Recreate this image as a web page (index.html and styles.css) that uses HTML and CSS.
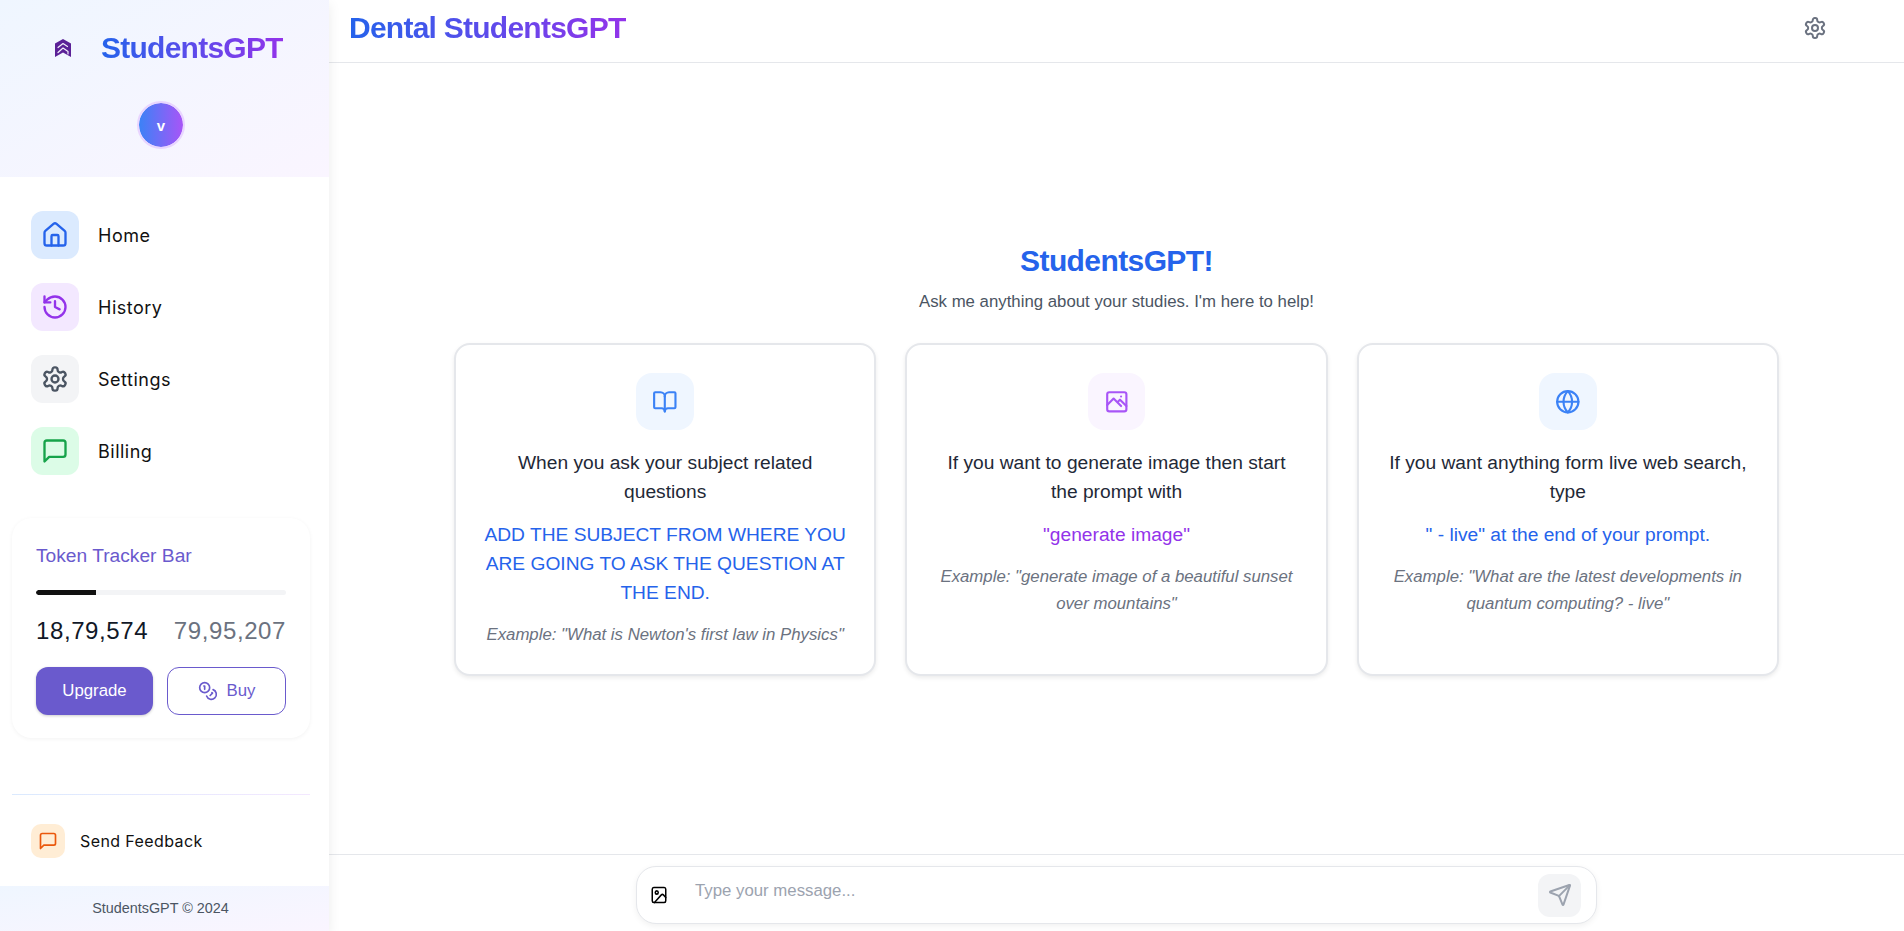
FILE: index.html
```html
<!DOCTYPE html>
<html lang="en">
<head>
    <meta charset="UTF-8">
    <meta name="viewport" content="width=device-width, initial-scale=1.0">
    <title>Dental StudentsGPT</title>
    <link rel="stylesheet" href="styles.css">
</head>
<body>

    <aside class="sidebar">
        <div class="side-head">
            <div class="brand">
                <svg class="brand-logo" viewBox="0 0 16 18"><path class="logo-shape" d="M8 0 16 4.500V18L8 13.500 0 18V4.500Z"/><path class="logo-cut" d="M3 8.500 8 4.500 12.500 7.500"/><path class="logo-cut" d="M3 13.500 8 9 13 12.500V15"/></svg>
                <span class="brand-name">StudentsGPT</span>
            </div>
            <div class="avatar">v</div>
        </div>

        <nav class="side-nav">
            <a class="nav-item">
                <span class="nav-icon bg-blue">
                    <svg class="ico-28 c-blue" viewBox="0 0 24 24"><path d="M15 21v-8a1 1 0 0 0-1-1h-4a1 1 0 0 0-1 1v8"/><path d="M3 10a2 2 0 0 1 .709-1.528l7-5.999a2 2 0 0 1 2.582 0l7 5.999A2 2 0 0 1 21 10v9a2 2 0 0 1-2 2H5a2 2 0 0 1-2-2z"/></svg>
                </span>
                Home
            </a>
            <a class="nav-item">
                <span class="nav-icon bg-purple">
                    <svg class="ico-28 c-purple" viewBox="0 0 24 24"><path d="M3 12a9 9 0 1 0 9-9 9.75 9.75 0 0 0-6.74 2.74L3 8"/><path d="M3 3v5h5"/><path d="M12 7v5l4 2"/></svg>
                </span>
                History
            </a>
            <a class="nav-item">
                <span class="nav-icon bg-gray">
                    <svg class="ico-28 c-slate" viewBox="0 0 24 24"><path d="M12.22 2h-.44a2 2 0 0 0-2 2v.18a2 2 0 0 1-1 1.73l-.43.25a2 2 0 0 1-2 0l-.15-.08a2 2 0 0 0-2.73.73l-.22.38a2 2 0 0 0 .73 2.73l.15.1a2 2 0 0 1 1 1.72v.51a2 2 0 0 1-1 1.74l-.15.09a2 2 0 0 0-.73 2.73l.22.38a2 2 0 0 0 2.73.73l.15-.08a2 2 0 0 1 2 0l.43.25a2 2 0 0 1 1 1.73V20a2 2 0 0 0 2 2h.44a2 2 0 0 0 2-2v-.18a2 2 0 0 1 1-1.73l.43-.25a2 2 0 0 1 2 0l.15.08a2 2 0 0 0 2.73-.73l.22-.39a2 2 0 0 0-.73-2.73l-.15-.08a2 2 0 0 1-1-1.74v-.5a2 2 0 0 1 1-1.74l.15-.09a2 2 0 0 0 .73-2.73l-.22-.38a2 2 0 0 0-2.73-.73l-.15.08a2 2 0 0 1-2 0l-.43-.25a2 2 0 0 1-1-1.73V4a2 2 0 0 0-2-2z"/><circle cx="12" cy="12" r="3"/></svg>
                </span>
                Settings
            </a>
            <a class="nav-item">
                <span class="nav-icon bg-green">
                    <svg class="ico-28 c-green" viewBox="0 0 24 24"><path d="M21 15a2 2 0 0 1-2 2H7l-4 4V5a2 2 0 0 1 2-2h14a2 2 0 0 1 2 2z"/></svg>
                </span>
                Billing
            </a>
        </nav>

        <div class="token-card">
            <div class="token-title">Token Tracker Bar</div>
            <div class="token-bar"><div class="token-fill" style="width: 24%"></div></div>
            <div class="token-nums">
                <span class="used">18,79,574</span>
                <span class="total">79,95,207</span>
            </div>
            <div class="token-actions">
                <button class="btn-upgrade">Upgrade</button>
                <button class="btn-buy">
                    <svg class="ico-20" viewBox="0 0 24 24"><circle cx="8" cy="8" r="6"/><path d="M18.09 10.37A6 6 0 1 1 10.34 18"/><path d="M7 6h1v4"/><path d="m16.71 13.88.7.71-2.82 2.82"/></svg>
                    Buy
                </button>
            </div>
        </div>

        <div class="side-bottom">
            <div class="side-line"></div>
            <a class="feedback">
                <span class="feedback-icon">
                    <svg class="ico-20 c-orange" viewBox="0 0 24 24"><path d="M21 15a2 2 0 0 1-2 2H7l-4 4V5a2 2 0 0 1 2-2h14a2 2 0 0 1 2 2z"/></svg>
                </span>
                Send Feedback
            </a>
            <div class="side-foot">StudentsGPT © 2024</div>
        </div>
    </aside>

    <main class="main">
        <header class="topbar">
            <h1 class="page-title">Dental StudentsGPT</h1>
            <svg class="ico-24 c-gray" viewBox="0 0 24 24"><path d="M12.22 2h-.44a2 2 0 0 0-2 2v.18a2 2 0 0 1-1 1.73l-.43.25a2 2 0 0 1-2 0l-.15-.08a2 2 0 0 0-2.73.73l-.22.38a2 2 0 0 0 .73 2.73l.15.1a2 2 0 0 1 1 1.72v.51a2 2 0 0 1-1 1.74l-.15.09a2 2 0 0 0-.73 2.73l.22.38a2 2 0 0 0 2.73.73l.15-.08a2 2 0 0 1 2 0l.43.25a2 2 0 0 1 1 1.73V20a2 2 0 0 0 2 2h.44a2 2 0 0 0 2-2v-.18a2 2 0 0 1 1-1.73l.43-.25a2 2 0 0 1 2 0l.15.08a2 2 0 0 0 2.73-.73l.22-.39a2 2 0 0 0-.73-2.73l-.15-.08a2 2 0 0 1-1-1.74v-.5a2 2 0 0 1 1-1.74l.15-.09a2 2 0 0 0 .73-2.73l-.22-.38a2 2 0 0 0-2.73-.73l-.15.08a2 2 0 0 1-2 0l-.43-.25a2 2 0 0 1-1-1.73V4a2 2 0 0 0-2-2z"/><circle cx="12" cy="12" r="3"/></svg>
        </header>

        <section class="welcome">
            <h2 class="welcome-title">StudentsGPT!</h2>
            <p class="welcome-sub">Ask me anything about your studies. I'm here to help!</p>

            <div class="cards">
                <div class="card">
                    <span class="card-icon bg-blue-soft">
                        <svg class="ico-26 c-blue-light" viewBox="0 0 24 24"><path d="M12 7v14"/><path d="M3 18a1 1 0 0 1-1-1V4a1 1 0 0 1 1-1h5a4 4 0 0 1 4 4 4 4 0 0 1 4-4h5a1 1 0 0 1 1 1v13a1 1 0 0 1-1 1h-6a3 3 0 0 0-3 3 3 3 0 0 0-3-3z"/></svg>
                    </span>
                    <p class="card-text">When you ask your subject related questions</p>
                    <p class="card-hint c-text-blue">ADD THE SUBJECT FROM WHERE YOU ARE GOING TO ASK THE QUESTION AT THE END.</p>
                    <p class="card-example">Example: "What is Newton's first law in Physics"</p>
                </div>
                <div class="card">
                    <span class="card-icon bg-purple-soft">
                        <svg class="ico-26 c-purple-light" viewBox="0 0 24 24"><rect x="3" y="3" width="18" height="18" rx="2"/><path d="M3 15l6-6 7 7"/><path d="M13 12l2-2 6 6"/><path d="M16 7h.01"/></svg>
                    </span>
                    <p class="card-text">If you want to generate image then start the prompt with</p>
                    <p class="card-hint c-text-purple">"generate image"</p>
                    <p class="card-example">Example: "generate image of a beautiful sunset over mountains"</p>
                </div>
                <div class="card">
                    <span class="card-icon bg-blue-soft">
                        <svg class="ico-26 c-blue-light" viewBox="0 0 24 24"><circle cx="12" cy="12" r="10"/><path d="M12 2a14.500 14.500 0 0 0 0 20 14.500 14.500 0 0 0 0-20"/><path d="M2 12h20"/></svg>
                    </span>
                    <p class="card-text">If you want anything form live web search, type</p>
                    <p class="card-hint c-text-blue">" - live" at the end of your prompt.</p>
                    <p class="card-example">Example: "What are the latest developments in quantum computing? - live"</p>
                </div>
            </div>
        </section>

        <footer class="composer">
            <div class="composer-box">
                <svg class="composer-image" viewBox="0 0 24 24" preserveAspectRatio="none"><rect x="3" y="3" width="18" height="18" rx="2"/><circle cx="9" cy="9" r="2"/><path d="m21 15-3.086-3.086a2 2 0 0 0-2.828 0L6 21"/></svg>
                <span class="composer-text">Type your message...</span>
                <button class="send-btn">
                    <svg class="ico-24 c-muted" viewBox="0 0 24 24"><path d="M14.536 21.686a.5.5 0 0 0 .937-.024l6.500-19a.496.496 0 0 0-.635-.635l-19 6.500a.5.5 0 0 0-.024.937l7.930 3.180a2 2 0 0 1 1.112 1.110z"/><path d="m21.854 2.147-10.940 10.939"/></svg>
                </button>
            </div>
        </footer>
    </main>

</body>
</html>
```

FILE: styles.css
```css
* {
    box-sizing: border-box;
}
body {
    font-family: "Liberation Sans", Arial, sans-serif;
    margin: 0;
    height: 931px;
    overflow: hidden;
    display: flex;
    background: #fff;
    color: #111827;
}
p, h1, h2 {
    margin: 0;
}
svg {
    fill: none;
    stroke: currentColor;
    stroke-width: 2;
    stroke-linecap: round;
    stroke-linejoin: round;
    flex-shrink: 0;
}
.ico-20 { width: 20px; height: 20px; }
.ico-24 { width: 24px; height: 24px; }
.ico-26 { width: 25.6px; height: 25.6px; }
.ico-28 { width: 28px; height: 28px; }
.c-blue { color: #2563eb; }
.c-blue-light { color: #3b82f6; }
.c-purple { color: #9333ea; }
.c-purple-light { color: #a855f7; }
.c-slate { color: #4b5563; }
.c-gray { color: #6b7280; }
.c-green { color: #16a34a; }
.c-orange { color: #ea580c; }
.c-muted { color: #9ca3af; }
.bg-blue { background: #dbeafe; }
.bg-purple { background: #f3e8ff; }
.bg-gray { background: #f3f4f6; }
.bg-green { background: #dcfce7; }
.bg-blue-soft { background: #eff6ff; }
.bg-purple-soft { background: #faf5ff; }
.c-text-blue { color: #2563eb; }
.c-text-purple { color: #9333ea; }

/* sidebar */
.sidebar {
    width: 329px;
    flex-shrink: 0;
    height: 100%;
    display: flex;
    flex-direction: column;
    background: #fff;
    box-shadow: 0 4px 12px rgba(0, 0, 0, 0.08);
    position: relative;
    z-index: 2;
}
.side-head {
    height: 177px;
    padding-top: 24px;
    background: linear-gradient(to bottom right, #eff6ff, #faf5ff);
}
.brand {
    display: flex;
    align-items: center;
    height: 48px;
    padding-left: 55px;
}
.brand-logo {
    width: 16px;
    height: 18px;
    margin-right: 30px;
}
.logo-shape {
    fill: #5b2197;
    stroke: none;
}
.logo-cut {
    stroke: #f3f0fc;
    stroke-width: 1.2;
}
.brand-name {
    font-size: 30px;
    font-weight: 700;
    letter-spacing: -0.75px;
    background: linear-gradient(to right, #2563eb, #9333ea);
    -webkit-background-clip: text;
    background-clip: text;
    color: transparent;
}
.avatar {
    width: 48px;
    height: 48px;
    margin: 29px 0 0 137px;
    border-radius: 50%;
    border: 2px solid #e9d5ff;
    display: flex;
    align-items: center;
    justify-content: center;
    background: linear-gradient(to right, #3b82f6, #a855f7);
    color: #fff;
    font-size: 15px;
    font-weight: 700;
    background-clip: padding-box;
}
.side-nav {
    display: flex;
    flex-direction: column;
    gap: 24px;
    padding: 34px 31px 0;
}
.nav-item {
    display: flex;
    align-items: center;
    gap: 19px;
    font-family: Inter, sans-serif;
    font-size: 18px;
    letter-spacing: 0.5px;
    color: #111;
}
.nav-icon {
    width: 48px;
    height: 48px;
    border-radius: 12px;
    display: flex;
    align-items: center;
    justify-content: center;
}
.token-card {
    margin: 43px 19px 0 12px;
    height: 220px;
    padding: 24px;
    border-radius: 20px;
    background: #fff;
    box-shadow: 0 1px 4px rgba(0, 0, 0, 0.05);
}
.token-title {
    font-size: 19.2px;
    color: #6a5acd;
    line-height: 27px;
}
.token-bar {
    height: 5px;
    margin-top: 21px;
    border-radius: 3px;
    background: #f3f4f6;
    overflow: hidden;
}
.token-fill {
    height: 100%;
    background: #111;
    border-radius: 3px 0 0 3px;
}
.token-nums {
    display: flex;
    justify-content: space-between;
    margin-top: 21px;
    font-size: 24px;
    letter-spacing: 0.6px;
    line-height: 30px;
}
.used { color: #111827; }
.total { color: #6b7280; }
.token-actions {
    display: flex;
    gap: 14px;
    margin-top: 21px;
}
.token-actions button {
    height: 48px;
    border-radius: 12px;
    font-family: inherit;
    font-size: 16.8px;
}
.btn-upgrade {
    width: 117px;
    border: none;
    background: #6a5acd;
    color: #fff;
    box-shadow: 0 1px 3px rgba(0, 0, 0, 0.2);
}
.btn-buy {
    width: 119px;
    border: 1px solid #6a5acd;
    background: #fff;
    color: #6a5acd;
    display: flex;
    align-items: center;
    justify-content: center;
    gap: 9px;
}
.side-bottom {
    margin-top: auto;
}
.side-line {
    height: 1px;
    margin: 0 19px 0 12px;
    background: linear-gradient(to right, #dbeafe, #f3e8ff);
}
.feedback {
    display: flex;
    align-items: center;
    gap: 15px;
    height: 91px;
    padding-left: 31px;
    font-family: Inter, sans-serif;
    font-size: 16px;
    letter-spacing: 0.4px;
    color: #111;
}
.feedback-icon {
    width: 34px;
    height: 34px;
    border-radius: 10px;
    background: #ffedd5;
    display: flex;
    align-items: center;
    justify-content: center;
}
.side-foot {
    height: 45px;
    line-height: 45px;
    padding-right: 8px;
    text-align: center;
    font-size: 14.4px;
    color: #4b5563;
    background: linear-gradient(to bottom right, #eff6ff, #faf5ff);
}

/* main */
.main {
    flex: 1;
    min-width: 0;
    height: 100%;
    display: flex;
    flex-direction: column;
}
.topbar {
    height: 63px;
    flex-shrink: 0;
    border-bottom: 1px solid #e5e7eb;
    display: flex;
    align-items: center;
    justify-content: space-between;
    padding: 0 77px 6px 20px;
}
.page-title {
    font-size: 30px;
    font-weight: 700;
    letter-spacing: -0.75px;
    background: linear-gradient(to right, #2563eb, #9333ea);
    -webkit-background-clip: text;
    background-clip: text;
    color: transparent;
}
.welcome {
    flex: 1;
    min-height: 0;
    padding-top: 180px;
    text-align: center;
}
.welcome-title {
    font-size: 30px;
    font-weight: 700;
    letter-spacing: -0.6px;
    color: #2563eb;
    line-height: 36px;
}
.welcome-sub {
    margin-top: 11px;
    font-size: 16.8px;
    line-height: 24px;
    color: #4b5563;
}
.cards {
    display: grid;
    grid-template-columns: repeat(3, 1fr);
    gap: 29px;
    width: 1325px;
    margin: 29px auto 0;
}
.card {
    height: 333px;
    padding: 27.500px 26px;
    border: 2px solid #e5e7eb;
    border-radius: 16px;
    background: #fff;
    box-shadow: 0 2px 4px rgba(0, 0, 0, 0.08);
    display: flex;
    flex-direction: column;
    align-items: center;
}
.card-icon {
    width: 57.6px;
    height: 57.6px;
    flex-shrink: 0;
    border-radius: 16px;
    display: flex;
    align-items: center;
    justify-content: center;
}
.card-text {
    margin-top: 18px;
    font-size: 19.2px;
    line-height: 29px;
    color: #1f2937;
}
.card-hint {
    margin-top: 14px;
    font-size: 19.2px;
    line-height: 29px;
}
.card-example {
    margin-top: 15px;
    font-size: 16.8px;
    line-height: 26.8px;
    font-style: italic;
    color: #6b7280;
}
.composer {
    height: 77px;
    flex-shrink: 0;
    border-top: 1px solid #e5e7eb;
    padding: 11px 0 0 0;
}
.composer-box {
    width: 961px;
    height: 58px;
    margin: 0 auto;
    border: 1px solid #e5e7eb;
    border-radius: 20px;
    background: #fff;
    box-shadow: 0 2px 6px rgba(0, 0, 0, 0.06);
    display: flex;
    align-items: center;
    padding: 0 15px 0 13px;
}
.composer-image {
    width: 18px;
    height: 20px;
    color: #000;
}
.composer-text {
    margin-left: 27px;
    margin-bottom: 8px;
    font-size: 16.8px;
    color: #9ca3af;
}
.send-btn {
    width: 43px;
    height: 43px;
    margin-left: auto;
    border: none;
    border-radius: 12px;
    background: #f3f4f6;
    display: flex;
    align-items: center;
    justify-content: center;
    padding: 0;
}
```
